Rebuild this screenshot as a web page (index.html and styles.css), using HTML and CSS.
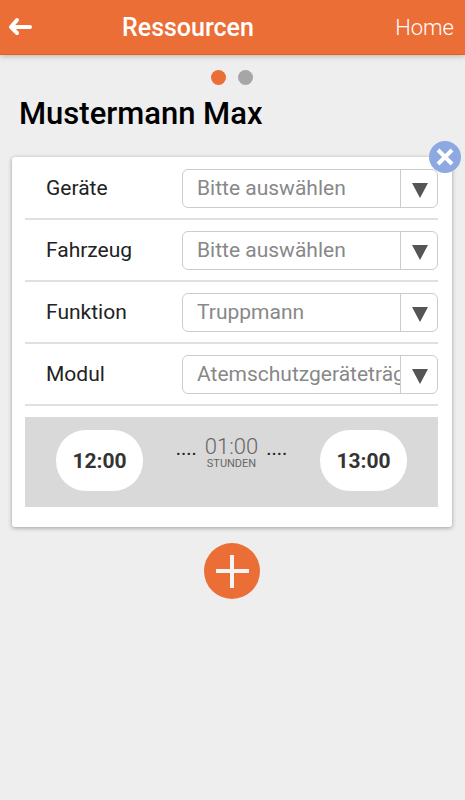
FILE: index.html
```
<!DOCTYPE html>
<html lang="de">
<head>
    <meta charset="UTF-8">
    <meta name="viewport" content="width=device-width, initial-scale=1.0">
    <title>Ressourcen</title>
    <link rel="stylesheet" href="styles.css">
</head>
<body>
    <header class="header">
        <button class="back" type="button" aria-label="Zurück">
            <svg width="26" height="20" viewBox="0 0 26 20">
                <path d="M9 3 L3 10 L9 16 M3 10 H22" fill="none" stroke="#fff" stroke-width="4" stroke-linecap="round" stroke-linejoin="round"/>
            </svg>
        </button>
        <h1>Ressourcen</h1>
        <a class="home" href="#">Home</a>
    </header>

    <main class="content">
        <div class="pager">
            <span class="dot active"></span>
            <span class="dot"></span>
        </div>

        <h2>Mustermann Max</h2>

        <form class="card">
            <button class="close" type="button" aria-label="Entfernen">
                <svg width="32" height="32" viewBox="0 0 32 32">
                    <path d="M9 9 L23 23 M23 9 L9 23" stroke="#fff" stroke-width="4"/>
                </svg>
            </button>

            <div class="row">
                <label for="geraete">Geräte</label>
                <div class="select">
                    <select id="geraete"><option>Bitte auswählen</option></select>
                    <span class="arrow"></span>
                </div>
            </div>
            <div class="row">
                <label for="fahrzeug">Fahrzeug</label>
                <div class="select">
                    <select id="fahrzeug"><option>Bitte auswählen</option></select>
                    <span class="arrow"></span>
                </div>
            </div>
            <div class="row">
                <label for="funktion">Funktion</label>
                <div class="select">
                    <select id="funktion"><option>Truppmann</option></select>
                    <span class="arrow"></span>
                </div>
            </div>
            <div class="row">
                <label for="modul">Modul</label>
                <div class="select">
                    <select id="modul"><option>Atemschutzgeräteträger</option></select>
                    <span class="arrow"></span>
                </div>
            </div>

            <div class="times">
                <button class="time" type="button">12:00</button>
                <div class="duration">
                    <span class="dots">....</span>
                    <div class="hours">
                        <span class="value">01:00</span>
                        <span class="unit">STUNDEN</span>
                    </div>
                    <span class="dots">....</span>
                </div>
                <button class="time" type="button">13:00</button>
            </div>
        </form>

        <button class="add" type="button" aria-label="Hinzufügen">
            <svg width="56" height="56" viewBox="0 0 56 56">
                <path d="M28 12 V45 M12 28 H45" stroke="#f4f4f4" stroke-width="4"/>
            </svg>
        </button>
    </main>
</body>
</html>
```
FILE: styles.css
```
* {
    box-sizing: border-box;
}

body {
    margin: 0;
    min-height: 100vh;
    background: #eee;
    font-family: Roboto, "Liberation Sans", sans-serif;
    color: #222;
}

button {
    padding: 0;
    border: none;
    font-family: inherit;
    cursor: pointer;
}

svg {
    display: block;
}

/* ===== Header ===== */
.header {
    display: grid;
    grid-template-columns: 114px 1fr auto;
    align-items: center;
    height: 55px;
    padding: 0 11px 0 8px;
    background: #eb6e37;
    border-bottom: 1px solid #ea5f10;
    box-shadow: 0 1px 6px rgba(0, 0, 0, .25);
}

.back {
    justify-self: start;
    background: none;
}

.header h1 {
    margin: 0;
    font-size: 25px;
    font-weight: 500;
    color: #fff;
}

.home {
    padding-top: 2px;
    font-size: 22px;
    line-height: 28px;
    font-weight: 300;
    color: #fff;
    text-decoration: none;
}

/* ===== Content ===== */
.content {
    padding: 15px 13px 0 12px;
}

.pager {
    display: flex;
    justify-content: center;
    gap: 12px;
}

.dot {
    width: 15px;
    height: 15px;
    border-radius: 50%;
    background: #a6a6a6;
}

.dot.active {
    background: #eb6e37;
}

h2 {
    margin: 10px 7px 24px;
    font-size: 31px;
    line-height: 38px;
    font-weight: 500;
    color: #000;
}

.card {
    position: relative;
    padding: 1px 14px 20px 13px;
    background: #fff;
    border-radius: 3px;
    box-shadow: 0 1px 4px rgba(0, 0, 0, .35);
}

.close {
    position: absolute;
    top: -16px;
    right: -9px;
    z-index: 1;
    border-radius: 50%;
    background: #8caae1;
}

/* ===== Rows ===== */
.row {
    display: flex;
    align-items: center;
    height: 62px;
    padding-left: 21px;
    border-bottom: 2px solid #e0e0e0;
}

.row label {
    flex: 0 0 136px;
    font-size: 21px;
    line-height: 24px;
}

.select {
    position: relative;
    flex: 1;
    min-width: 0;
}

.select select {
    appearance: none;
    display: block;
    width: 100%;
    height: 39px;
    padding: 0 37px 0 14px;
    border: 1px solid #ccc;
    border-radius: 6px;
    background: #fff;
    font-family: inherit;
    font-size: 21px;
    color: #888;
}

.arrow {
    position: absolute;
    top: 0;
    right: 0;
    bottom: 0;
    display: grid;
    place-items: center;
    width: 38px;
    padding-top: 4px;
    border-left: 1px solid #ccc;
    pointer-events: none;
}

.arrow::before {
    content: '';
    border-top: 15px solid #555;
    border-left: 8px solid transparent;
    border-right: 8px solid transparent;
}

/* ===== Times ===== */
.times {
    display: flex;
    justify-content: space-between;
    height: 90px;
    margin-top: 11px;
    padding: 13px 31px 0;
    background: #d9d9d9;
}

.time {
    width: 87px;
    height: 61px;
    border-radius: 30px;
    background: #fff;
    font-size: 21px;
    font-weight: 700;
    color: #333;
}

.duration {
    display: flex;
    gap: 8px;
}

.dots {
    font-size: 20px;
    line-height: 36px;
}

.hours {
    display: flex;
    flex-direction: column;
    align-items: center;
    padding-top: 5px;
}

.value {
    font-size: 22px;
    line-height: 24px;
    font-weight: 300;
    color: #666;
}

.unit {
    font-size: 11px;
    line-height: 10px;
    color: #666;
}

/* ===== Add button ===== */
.add {
    display: block;
    margin: 16px auto 0;
    border-radius: 50%;
    background: #eb6e37;
}
```
